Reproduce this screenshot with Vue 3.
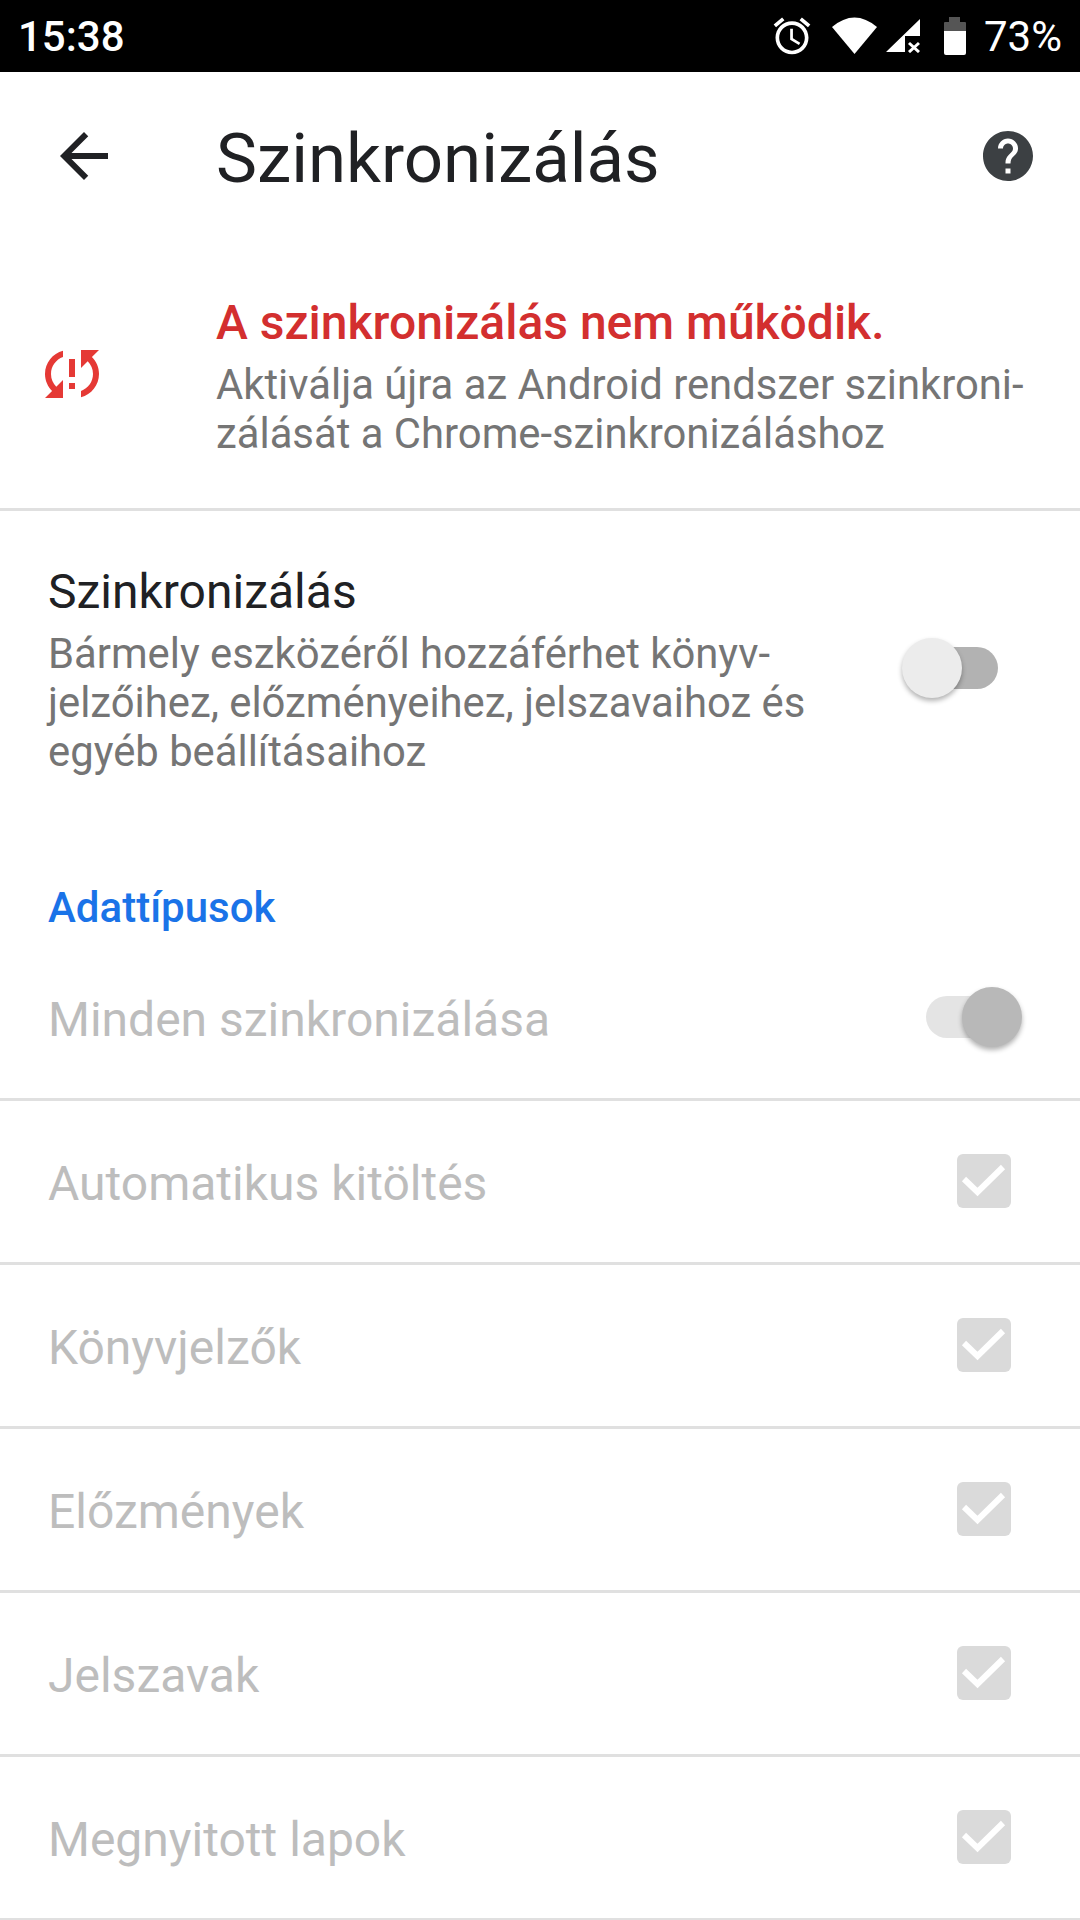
<script setup>
const rows = ['Automatikus kitöltés', 'Könyvjelzők', 'Előzmények', 'Jelszavak', 'Megnyitott lapok']
</script>

<template>
  <div class="screen">
    <div class="status">
      <span class="time">15:38</span>
      <div class="status-right">
        <svg class="alarm" width="44" height="44" viewBox="0 0 24 24" fill="#fff">
          <path d="M22 5.72l-4.6-3.86-1.29 1.53 4.6 3.86L22 5.72zM7.88 3.39L6.6 1.86 2 5.71l1.29 1.53 4.59-3.85zM12.5 8H11v6l4.75 2.85.75-1.23-4-2.37V8zM12 4c-4.97 0-9 4.03-9 9s4.03 9 9 9 9-4.03 9-9-4.03-9-9-9zm0 16c-3.87 0-7-3.13-7-7s3.13-7 7-7 7 3.13 7 7-3.13 7-7 7z" />
        </svg>
        <svg class="wifi" width="46" height="38" viewBox="0 0 46 38" fill="#fff">
          <path d="M0 10 Q22.5 -9 45 10 L22.5 37 Z" />
        </svg>
        <svg class="signal" width="34" height="34" viewBox="0 0 34 34" fill="#fff">
          <path d="M0 33 L34 0 V17 H19 V33 Z" />
          <path d="M23 24 L33 33 M33 24 L23 33" stroke="#fff" stroke-width="3" fill="none" />
        </svg>
        <svg class="battery" width="22" height="38" viewBox="0 0 22 38">
          <path d="M5 0 H16 V5 H21 Q22 5 22 6 V14 H0 V6 Q0 5 1 5 H5 Z" fill="#555" />
          <path d="M0 14 H22 V36 Q22 38 20 38 H2 Q0 38 0 36 Z" fill="#fff" />
        </svg>
        <span class="pct">73%</span>
      </div>
    </div>

    <div class="toolbar">
      <svg class="back" width="72" height="72" viewBox="0 0 24 24" fill="#202124">
        <path d="M20 11H7.83l5.59-5.59L12 4l-8 8 8 8 1.41-1.41L7.83 13H20v-2z" />
      </svg>
      <h1 class="title">Szinkronizálás</h1>
      <svg class="help" width="60" height="60" viewBox="0 0 24 24" fill="#3c4043">
        <path d="M12 2C6.48 2 2 6.48 2 12s4.48 10 10 10 10-4.48 10-10S17.52 2 12 2zm1 17h-2v-2h2v2zm2.07-7.75l-.9.92C13.45 12.9 13 13.5 13 15h-2v-.5c0-1.1.45-2.1 1.17-2.83l1.24-1.26c.37-.36.59-.86.59-1.41 0-1.1-.9-2-2-2s-2 .9-2 2H8c0-2.21 1.79-4 4-4s4 1.79 4 4c0 .88-.36 1.68-.93 2.25z" />
      </svg>
    </div>

    <div class="error">
      <svg class="sync-icon" width="72" height="72" viewBox="0 0 24 24" fill="#e53935">
        <path d="M3 12c0 2.21.91 4.2 2.36 5.64L3 20h6v-6l-2.24 2.24C5.68 15.15 5 13.66 5 12c0-2.61 1.67-4.83 4-5.65V4.26C5.55 5.15 3 8.27 3 12zm8 5h2v-2h-2v2zM21 4h-6v6l2.24-2.24C18.32 8.85 19 10.34 19 12c0 2.61-1.67 4.83-4 5.65v2.09c3.45-.89 6-4.01 6-7.74 0-2.21-.91-4.2-2.36-5.64L21 4zm-10 9h2V7h-2v6z" />
      </svg>
      <div class="error-text">
        <div class="error-title">A szinkronizálás nem működik.</div>
        <div class="body-text">Aktiválja újra az Android rendszer szinkroni-<br />zálását a Chrome-szinkronizáláshoz</div>
      </div>
    </div>

    <div class="sync">
      <div>
        <div class="sync-title">Szinkronizálás</div>
        <div class="body-text">Bármely eszközéről hozzáférhet könyv-<br />jelzőihez, előzményeihez, jelszavaihoz és<br />egyéb beállításaihoz</div>
      </div>
      <div class="switch off">
        <div class="track"></div>
        <div class="thumb"></div>
      </div>
    </div>

    <div class="section">Adattípusok</div>

    <div class="all">
      <span class="row-label">Minden szinkronizálása</span>
      <div class="switch on">
        <div class="track"></div>
        <div class="thumb"></div>
      </div>
    </div>

    <div v-for="row in rows" :key="row" class="row">
      <span class="row-label">{{ row }}</span>
      <svg class="check" width="54" height="54" viewBox="0 0 54 54">
        <rect width="54" height="54" rx="6" fill="#dadada" />
        <path d="M7 25 L20.5 38 L46 13" fill="none" stroke="#fff" stroke-width="6" />
      </svg>
    </div>
  </div>
</template>

<style>
html, body {
  margin: 0;
  background: #fff;
}
</style>

<style scoped>
.screen {
  width: 1080px;
  height: 1920px;
  overflow: hidden;
  background: #fff;
  font-family: Roboto, "Liberation Sans", sans-serif;
}

.status {
  height: 72px;
  background: #000;
  color: #fff;
  display: flex;
  align-items: center;
  justify-content: space-between;
  padding: 0 18px;
  box-sizing: border-box;
  font-size: 42px;
}
.time {
  font-weight: 500;
}
.status-right {
  display: flex;
  align-items: center;
}
.alarm {
  margin-right: 18px;
}
.wifi {
  margin-right: 8px;
}
.signal {
  margin-right: 24px;
}
.battery {
  margin-right: 18px;
}

.toolbar {
  height: 168px;
  display: flex;
  align-items: center;
  padding: 0 42px 0 48px;
}
.title {
  margin: 0 0 0 96px;
  padding-top: 4px;
  flex: 1;
  font-size: 69px;
  font-weight: 400;
  color: #202124;
}

.error {
  height: 268px;
  border-bottom: 3px solid #e0e0e0;
  display: flex;
  align-items: center;
  padding-left: 36px;
}
.sync-icon {
  margin-right: 108px;
}
.error-text {
  padding-bottom: 6px;
}
.error-title {
  font-size: 48px;
  font-weight: 500;
  color: #d32f2f;
  line-height: 75px;
}
.body-text {
  font-size: 41.8px;
  line-height: 49px;
  color: #757575;
}

.sync {
  display: flex;
  justify-content: space-between;
  align-items: center;
  padding: 44px 82px 0 48px;
}
.sync-title {
  font-size: 48px;
  line-height: 74px;
  color: #202124;
}

.switch {
  position: relative;
  width: 96px;
  height: 60px;
}
.sync .switch {
  margin-top: 4px;
}
.track {
  position: absolute;
  top: 9px;
  height: 42px;
  width: 84px;
  border-radius: 21px;
}
.thumb {
  position: absolute;
  top: 0;
  width: 60px;
  height: 60px;
  border-radius: 50%;
  box-shadow: 0 3px 5px rgba(0, 0, 0, 0.3);
}
.off .track {
  right: 0;
  background: #b2b2b2;
}
.off .thumb {
  left: 0;
  background: #ececec;
}
.on .track {
  left: 0;
  background: #e4e4e4;
}
.on .thumb {
  right: 0;
  background: #b8b8b8;
}

.section {
  margin-top: 104px;
  padding-left: 48px;
  font-size: 42px;
  line-height: 56px;
  font-weight: 500;
  color: #1a73e8;
}

.all,
.row {
  box-sizing: border-box;
  display: flex;
  align-items: center;
  justify-content: space-between;
  padding-left: 48px;
  border-bottom: 3px solid #e0e0e0;
}
.all {
  height: 165px;
  padding-right: 58px;
}
.row {
  height: 164px;
  padding-right: 69px;
}
.row-label {
  padding-top: 4px;
  font-size: 48px;
  color: #bdbdbd;
}
.check {
  margin-bottom: 2px;
}
</style>
